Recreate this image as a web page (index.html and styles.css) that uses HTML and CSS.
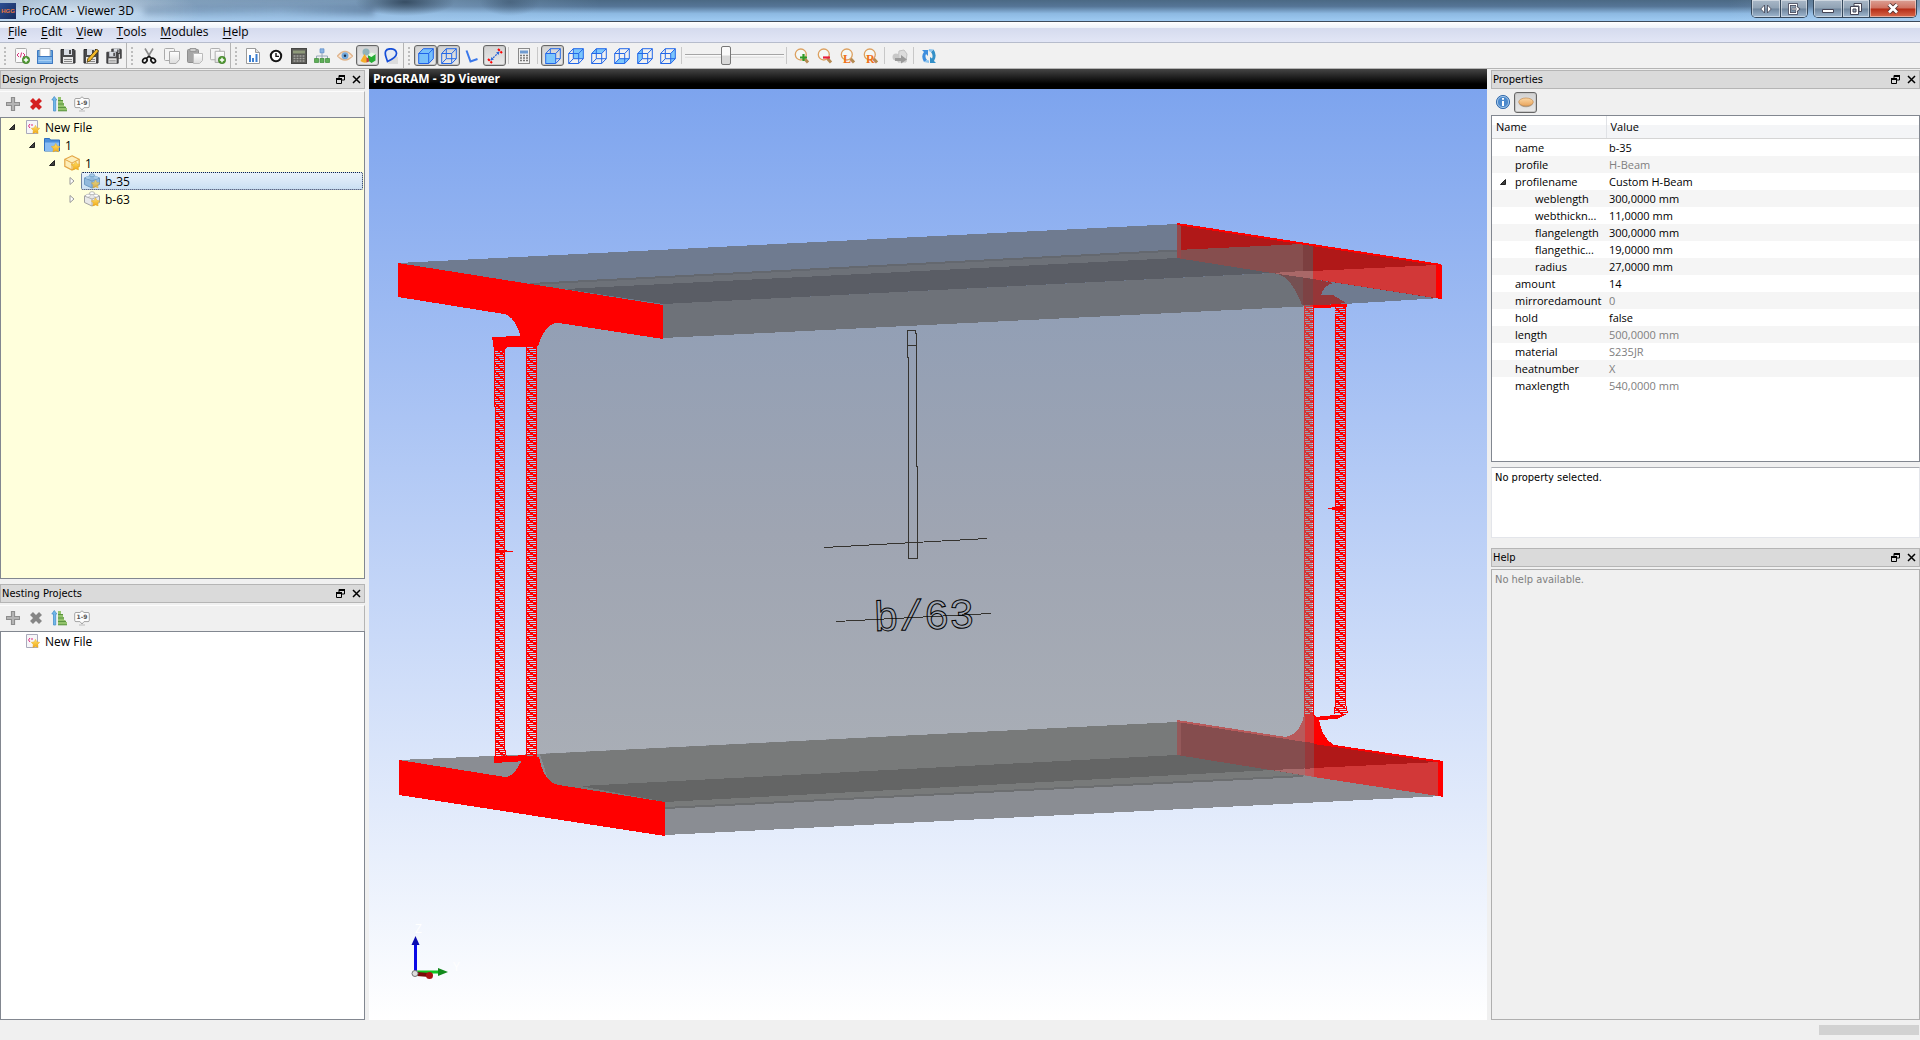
FILE: index.html
```html
<!DOCTYPE html>
<html lang="en">
<head>
<meta charset="utf-8">
<title>ProCAM - Viewer 3D</title>
<link rel="stylesheet" href="styles.css">
</head>
<body>
<svg class="defs" width="0" height="0" aria-hidden="true">
  <defs>
    <linearGradient id="gold" x1="0" y1="0" x2="0" y2="1"><stop offset="0" stop-color="#ffe36b"/><stop offset="1" stop-color="#f0a818"/></linearGradient>
    <linearGradient id="skin" x1="0" y1="0" x2="0" y2="1"><stop offset="0" stop-color="#fbd7a4"/><stop offset="1" stop-color="#e9a45c"/></linearGradient>
    <linearGradient id="silver" x1="0" y1="0" x2="0" y2="1"><stop offset="0" stop-color="#fff"/><stop offset="1" stop-color="#dcdcdc"/></linearGradient>
  </defs>
  <symbol id="plusbadge" viewBox="0 0 8 8"><circle cx="4" cy="4" r="3.7" fill="#4f9a32" stroke="#37731f" stroke-width=".6"/><path d="M4 1.8v4.4M1.8 4h4.4" stroke="#fff" stroke-width="1.4"/></symbol>
  <symbol id="star" viewBox="0 0 10 10"><path d="M5 .4l1.5 2.8 3.2.5-2.2 2.3.4 3.4L5 8.2 2.1 9.4l.4-3.4L.3 3.7l3.2-.5z" fill="url(#gold)" stroke="#e8a818" stroke-width=".5"/></symbol>
  <symbol id="new" viewBox="0 0 16 16"><rect x="1.500" y=".5" width="11" height="14" rx="1" fill="#fafafa" stroke="#aaa"/><path d="M5 5L3 7l2 2M9 5l2 2-2 2M7.600 4.500l-1.200 5" fill="none" stroke="#d8327c"/><use href="#plusbadge" x="8" y="8" width="8" height="8"/></symbol>
  <symbol id="open" viewBox="0 0 16 16"><path d="M.5 15.500V2.500h15v13z" fill="#5f9fdc" stroke="#3d78c0"/><path d="M3 .5h10v8H3z" fill="#fff" stroke="#bbb"/><path d="M.5 8.500h15v7H.5z" fill="#7db4ea" stroke="#3d78c0"/><path d="M1.500 12.500h13" stroke="#a9d0f4"/></symbol>
  <symbol id="save" viewBox="0 0 16 16"><path d="M1 1.500h13l1 1V15H1z" fill="#4a4a4c" stroke="#2e2e30"/><path d="M4 1h8v6H4z" fill="#d9dde4"/><path d="M9 2h2v4H9z" fill="#4a4a4c"/><path d="M3 9h10v6H3z" fill="#e8e8e8"/><path d="M4 11.500h8M4 13.500h8" stroke="#888"/></symbol>
  <symbol id="saveas" viewBox="0 0 16 16"><use href="#save" width="16" height="16"/><path d="M13.500 1l2 2-8 9.500-3.500 1.800 1-3.800z" fill="#f3b928" stroke="#4c3a10" stroke-width=".8"/></symbol>
  <symbol id="saveall" viewBox="0 0 16 16"><use href="#save" x="5" y="0" width="11" height="11"/><use href="#save" x="0" y="3" width="13" height="13"/></symbol>
  <symbol id="cut" viewBox="0 0 16 16"><path d="M4 .5l6 10M12 .5l-6 10" stroke="#8a8a8a" stroke-width="1.600"/><ellipse cx="3.800" cy="12.500" rx="2" ry="2.500" transform="rotate(40 3.800 12.500)" fill="none" stroke="#111" stroke-width="1.700"/><ellipse cx="12.200" cy="12.500" rx="2" ry="2.500" transform="rotate(-40 12.200 12.500)" fill="none" stroke="#111" stroke-width="1.700"/><path d="M5 10.500l3-2 3 2" fill="none" stroke="#111" stroke-width="1.500"/></symbol>
  <symbol id="copy" viewBox="0 0 16 16"><rect x=".5" y=".5" width="10" height="12" rx="1" fill="#f4f4f4" stroke="#aaa"/><path d="M5.500 3.500h10v8l-3.500 4h-6.500z" fill="url(#silver)" stroke="#aaa"/></symbol>
  <symbol id="paste" viewBox="0 0 16 16"><rect x=".5" y="1.500" width="11" height="13" rx="1" fill="#a6a6a6" stroke="#8e8e8e"/><path d="M3 .5h6v3H3z" fill="#ccc" stroke="#999"/><path d="M6.500 5.500h9v7l-3 3h-6z" fill="url(#silver)" stroke="#bbb"/></symbol>
  <symbol id="dup" viewBox="0 0 16 16"><use href="#copy" width="15" height="15"/><use href="#plusbadge" x="8" y="8" width="8" height="8"/></symbol>
  <symbol id="chart" viewBox="0 0 16 16"><path d="M1.500 .5h9l4 4v11h-13z" fill="#fff" stroke="#9a9a9a"/><path d="M10.500 .5v4h4" fill="#ddd" stroke="#9a9a9a"/><path d="M5 14V7M8 14V10M11.500 14V6" stroke="#3c7fd0" stroke-width="2"/></symbol>
  <symbol id="clock" viewBox="0 0 16 16"><circle cx="8" cy="8" r="5.200" fill="#fff" stroke="#141414" stroke-width="2"/><path d="M8 5v3.400h3" fill="none" stroke="#141414" stroke-width="1.400"/></symbol>
  <symbol id="calc" viewBox="0 0 16 16"><rect x=".5" y=".5" width="15" height="15" fill="#5c5c58" stroke="#474744"/><path d="M2 2.500h12v3H2z" fill="#8f9a7a"/><path d="M2.500 8h11M2.500 10.500h11M2.500 13h11" stroke="#a5a5a0" stroke-width="1.500" stroke-dasharray="2 1"/></symbol>
  <symbol id="org" viewBox="0 0 16 16"><path d="M8 4v4M2.500 11V8h11v3M8 8v3" fill="none" stroke="#98a8b8"/><path d="M6 .8h4v4H6z" fill="#8ab4e4" stroke="#5b8cc8" stroke-width=".7"/><path d="M.5 10.500h4v4h-4zM6 10.500h4v4H6zM11.500 10.500h4v4h-4z" fill="#5fae58" stroke="#3c8a3a" stroke-width=".7"/></symbol>
  <symbol id="eye" viewBox="0 0 16 16"><path d="M.5 8Q8-1 15.500 8 8 16 .5 8z" fill="#fae6d4" stroke="#e0b48c" stroke-width="1.300"/><circle cx="8" cy="7.800" r="3.500" fill="#74a9dc"/><circle cx="8" cy="7.800" r="1.200" fill="#1e2e48"/></symbol>
  <symbol id="shapes" viewBox="0 0 16 16"><circle cx="6" cy="4" r="3.500" fill="#8fb3ba"/><path d="M4.500 6L9 13q-4 3.500-8.500 0z" fill="#f5ae2a"/><path d="M8 7l3 1.500L15.500 6v6.500L11.500 15 8 12.500z" fill="#26ad35"/><path d="M6.500 9.500l2.500 1v3l-2.500 1z" fill="#b44"/><path d="M8 7l3.500 2L15.500 6l-4-1.500z" fill="#e9fbe5"/></symbol>
  <symbol id="lens" viewBox="0 0 16 16"><path d="M8 9h7v7H5z" fill="#dcdcdc"/><path d="M8 .8C2 .5 1.500 4.500 3 9l1.500 4.500Q14 9 13.500 5 13 1 8 .8z" fill="#e6ebf2" stroke="#164ed8" stroke-width="1.700"/></symbol>
  <symbol id="cubewire" viewBox="0 0 16 16"><path d="M.7 5.500h10v10h-10zM5.300.7h10v10h-10zM.7 5.500L5.300.7M10.700 5.500L15.300.7M.7 15.500l4.600-4.800M10.700 15.500l4.600-4.800" fill="none" stroke="#2468e8"/></symbol>
  <symbol id="cubesolid" viewBox="0 0 16 16"><path d="M.7 5.500L5.300.7h10v10l-4.600 4.800h-10z" fill="#78c0fb" stroke="#1f62ea"/><path d="M.7 5.500h10v10M10.700 5.500L15.300.7" fill="none" stroke="#1f62ea"/></symbol>
  <symbol id="cubefront" viewBox="0 0 16 16"><path d="M5.300.7h10v10h-10zM.7 5.500L5.300.7M.7 15.500l4.600-4.800" fill="none" stroke="#2468e8"/><path d="M.7 5.500h10v10h-10z" fill="#7cc6fc" stroke="#2468e8"/><path d="M10.700 5.500L15.300.7M10.700 15.500l4.600-4.800" stroke="#2468e8"/></symbol>
  <symbol id="cubeback" viewBox="0 0 16 16"><path d="M5.300.7h10v10h-10z" fill="#7cc6fc"/><use href="#cubewire" width="16" height="16"/></symbol>
  <symbol id="cubetop" viewBox="0 0 16 16"><path d="M.7 5.500L5.300.7h10l-4.600 4.800z" fill="#7cc6fc"/><use href="#cubewire" width="16" height="16"/></symbol>
  <symbol id="cubebottom" viewBox="0 0 16 16"><path d="M.7 15.500l4.600-4.800h10l-4.600 4.800z" fill="#7cc6fc"/><use href="#cubewire" width="16" height="16"/></symbol>
  <symbol id="cubeleft" viewBox="0 0 16 16"><path d="M.7 5.500L5.300.7v10L.7 15.500z" fill="#7cc6fc"/><use href="#cubewire" width="16" height="16"/></symbol>
  <symbol id="cuberight" viewBox="0 0 16 16"><path d="M10.700 5.500L15.300.7v10l-4.600 4.800z" fill="#7cc6fc"/><use href="#cubewire" width="16" height="16"/></symbol>
  <symbol id="angle" viewBox="0 0 16 16"><path d="M2.500 2.500l4 11 7-2.500" fill="none" stroke="#3a78ea" stroke-width="2"/></symbol>
  <symbol id="measure" viewBox="0 0 16 16"><path d="M1 11l4 4M11 1l4 4" stroke="#f00" stroke-width="2" stroke-dasharray="2.500 1"/><path d="M4 12l8-8" stroke="#2b66d8" stroke-width="1.200" stroke-dasharray="2 1"/><path d="M12.500 3.500L9 4.500l2.500 2.500zM3.500 12.500l1-3.500L7 11.500z" fill="#2b66d8"/></symbol>
  <symbol id="calc2" viewBox="0 0 16 16"><rect x="2.500" y=".5" width="11" height="15" fill="#f2f2f2" stroke="#8a8a8a"/><path d="M4 2.500h8v3H4z" fill="#6f9bd0"/><path d="M4 7.500h8M4 10h8M4 12.500h8" stroke="#777" stroke-width="1.500" stroke-dasharray="2 1"/></symbol>
  <symbol id="mag" viewBox="0 0 16 16"><path d="M10 10l4 4.500" stroke="#b58a52" stroke-width="3"/><circle cx="6.800" cy="6.500" r="5.500" fill="#f4f8f6" stroke="#dca060" stroke-width="1.300"/></symbol>
  <symbol id="zin" viewBox="0 0 16 16"><use href="#mag" width="16" height="16"/><path d="M9.500 6v7M6 9.500h7" stroke="#2f9a28" stroke-width="2.200"/></symbol>
  <symbol id="zout" viewBox="0 0 16 16"><use href="#mag" width="16" height="16"/><path d="M6 9.500h7" stroke="#e8203c" stroke-width="2.200"/></symbol>
  <symbol id="export" viewBox="0 0 16 16"><path d="M7 3l5-1 3 4-1 8H6z" fill="#dcdcdc" stroke="#c2c2c2"/><circle cx="4" cy="9" r="3.500" fill="#c8c8c8"/><path d="M3 10h6V7l6 4.500L9 15.500V13H3z" fill="#9a9a9a"/></symbol>
  <symbol id="refresh" viewBox="0 0 16 16"><path d="M1 2h6v6L5 6q-1.500 3 1 6L3 14Q-.5 8 3 4z" fill="#3f8ede"/><path d="M15 15H9V9l2 1.500Q12.500 7 10 4l2.500-2.500Q16.500 7 13 13z" fill="#3490c8"/><path d="M8 1l4.500.5L10 4 7.500 3zM8 15l-5-1 3-2 2 .5z" fill="#8cc4ee"/></symbol>
  <symbol id="plus" viewBox="0 0 16 16"><path d="M8 1v14M1 8h14" stroke="#8e8e8e" stroke-width="4.200"/><path d="M8 2v12M2 8h12" stroke="#b4b4b4" stroke-width="2"/></symbol>
  <symbol id="cross" viewBox="0 0 16 16"><path d="M3.500 3.500l9 9M12.500 3.500l-9 9" stroke="currentColor" stroke-width="4.200"/></symbol>
  <symbol id="sort" viewBox="0 0 16 16"><path d="M2.500 15V4H.8L3.300.5 5.800 4H4.700v11z" fill="#72b8ea" stroke="#4a92cc" stroke-width=".8"/><path d="M7 1h3v3h2v3h1v3h1.500v2H16v3H7z" fill="#93c36c"/><path d="M7 4.500h5M7 8h6M7 11.500h8M7 14.800h9" stroke="#5b9440"/></symbol>
  <symbol id="num" viewBox="0 0 16 16"><path d="M2 2.500h4L8 .8l2 1.700h4q1.300 0 1.300 1.300v6.500q0 1.300-1.300 1.300h-4l-2 2.400-2-2.400H2Q.7 11.600.7 10.300V3.800Q.7 2.500 2 2.500z" fill="#fcfcfc" stroke="#a4a4a4"/><path d="M5 15h6" stroke="#bbb"/></symbol>
  <symbol id="filestar" viewBox="0 0 16 16"><path d="M2.500 1.500h11v13h-11z" fill="#f6f6f8" stroke="#aab"/><path d="M6 5L4.500 7 6 9M8 5v2" stroke="#e0287c" fill="none"/><use href="#star" x="7" y="6" width="9" height="9"/></symbol>
  <symbol id="folderstar" viewBox="0 0 16 16"><path d="M.5 1.500h5l1 1.500h9v11H.5z" fill="#4b8fdc" stroke="#2f70c0"/><path d="M1 5.500h14V14H1z" fill="#8abcf2"/><use href="#star" x="7" y="6" width="9.500" height="9.500"/></symbol>
  <symbol id="boxstar" viewBox="0 0 16 16"><path d="M8 .8l7.200 3.500v7L8 15 .8 11.300v-7z" fill="#fdeeb8" stroke="#e3a545" stroke-width="1.200"/><path d="M.8 4.300L8 8l7.200-3.700M8 8v7" fill="none" stroke="#e3a545"/><use href="#star" x="7" y="6" width="9.500" height="9.500"/></symbol>
  <symbol id="bluebrick" viewBox="0 0 16 16"><path d="M8 2l7.500 3v6.500L8 15 .5 11.500V5z" fill="#92b9dc" stroke="#6f9cc4"/><path d="M.5 5L8 8l7.500-3M8 8v7" fill="none" stroke="#6f9cc4"/><ellipse cx="8" cy="2.200" rx="2.500" ry="1.500" fill="#a9cbe8" stroke="#6f9cc4" stroke-width=".7"/><ellipse cx="4" cy="4.600" rx="2.300" ry="1.400" fill="#a9cbe8"/><ellipse cx="12" cy="4.600" rx="2.300" ry="1.400" fill="#a9cbe8"/><use href="#star" x="7" y="6.500" width="9" height="9" opacity=".75"/></symbol>
  <symbol id="greybrick" viewBox="0 0 16 16"><path d="M8 2l7.500 3v6.500L8 15 .5 11.500V5z" fill="#e9e9e9" stroke="#a0a0a0"/><path d="M.5 5L8 8l7.500-3M8 8v7" fill="none" stroke="#b0b0b0"/><ellipse cx="8" cy="2.200" rx="2.500" ry="1.500" fill="#fff" stroke="#a0a0a0" stroke-width=".7"/><ellipse cx="4" cy="4.600" rx="2.300" ry="1.400" fill="#fff" stroke="#aaa" stroke-width=".5"/><ellipse cx="12" cy="4.600" rx="2.300" ry="1.400" fill="#fff" stroke="#aaa" stroke-width=".5"/><use href="#star" x="7" y="6.500" width="9" height="9"/></symbol>
  <symbol id="expanded" viewBox="0 0 8 8"><path d="M6.500 1.500v5h-5z" fill="#404040" stroke="#222"/></symbol>
  <symbol id="collapsed" viewBox="0 0 8 8"><path d="M2 .5L6 4 2 7.500z" fill="#fff" stroke="#999"/></symbol>
  <symbol id="float" viewBox="0 0 9 9"><path d="M3 3V.5h5.500V5H6" fill="none" stroke="#000"/><path d="M3 1h6" stroke="#000" stroke-width="2"/><path d="M.5 4h5v4.500h-5z" fill="none" stroke="#000"/><path d="M0 4h6" stroke="#000" stroke-width="2"/></symbol>
  <symbol id="close" viewBox="0 0 9 9"><path d="M1 1l7 7M8 1L1 8" stroke="#000" stroke-width="1.500"/></symbol>
  <symbol id="info" viewBox="0 0 16 16"><circle cx="8" cy="8" r="6.600" fill="#4c89cc" stroke="#3a6fae"/><circle cx="8" cy="8" r="5.600" fill="none" stroke="#b9d4ee" stroke-width=".8"/><path d="M8 7v5M8 4v1.800" stroke="#fff" stroke-width="2"/></symbol>
  <symbol id="oval" viewBox="0 0 16 16"><ellipse cx="8" cy="9" rx="7" ry="4.200" fill="#a9a298"/><ellipse cx="8" cy="8" rx="7.300" ry="4" fill="url(#skin)" stroke="#c58d50" stroke-width=".7"/></symbol>
</svg>

<header class="titlebar">
  <span class="appicon">HGG</span>
  <h1>ProCAM - Viewer 3D</h1>
  <span class="behind"></span>
  <div class="winbtns">
    <button type="button" class="w28" aria-label="Swap screen"><svg width="12" height="10" viewBox="0 0 12 10"><path d="M4.500 1v8L.8 5zM7.500 1v8l3.700-4z" fill="#fff" stroke="#445" stroke-width=".8"/></svg></button>
    <button type="button" class="w27" aria-label="Send to screen"><svg width="13" height="12" viewBox="0 0 13 12"><path d="M8.500 3.500v-2h-7v9h7v-2M4 6h6M8 3.800L10.500 6 8 8.200" fill="none" stroke="#445" stroke-width="2.600"/><path d="M8.500 3.500v-2h-7v9h7v-2M4 6h6M8 3.800L10.500 6 8 8.200" fill="none" stroke="#fff" stroke-width="1.100"/></svg></button>
  </div>
  <div class="winbtns">
    <button type="button" class="w28" aria-label="Minimize"><svg width="12" height="10" viewBox="0 0 12 10"><path d="M.5 5.500h11v3H.5z" fill="#fff" stroke="#445"/></svg></button>
    <button type="button" class="w27" aria-label="Restore"><svg width="12" height="12" viewBox="0 0 12 12"><path d="M4 .5h7.500v8H9V3H4z" fill="#fff" stroke="#445"/><path d="M.5 3.500H8.500v8h-8z" fill="#fff" stroke="#445"/><path d="M3 6h3v3H3z" fill="#9ab" stroke="#445"/></svg></button>
    <button type="button" class="w47 red" aria-label="Close"><svg width="12" height="11" viewBox="0 0 12 11"><path d="M2 1.500l8 8M10 1.500l-8 8" stroke="#503030" stroke-width="4.500"/><path d="M2 1.500l8 8M10 1.500l-8 8" stroke="#fff" stroke-width="2.800"/></svg></button>
  </div>
</header>

<nav class="menubar">
  <button type="button"><u>F</u>ile</button><button type="button"><u>E</u>dit</button><button type="button"><u>V</u>iew</button><button type="button"><u>T</u>ools</button><button type="button"><u>M</u>odules</button><button type="button"><u>H</u>elp</button>
</nav>

<div class="toolbar">
  <div class="group">
    <button type="button" class="tb" aria-label="New"><svg><use href="#new"/></svg></button>
    <button type="button" class="tb" aria-label="Open"><svg><use href="#open"/></svg></button>
    <button type="button" class="tb" aria-label="Save"><svg><use href="#save"/></svg></button>
    <button type="button" class="tb" aria-label="Save as"><svg><use href="#saveas"/></svg></button>
    <button type="button" class="tb" aria-label="Save all"><svg><use href="#saveall"/></svg></button>
  </div>
  <div class="group">
    <button type="button" class="tb" aria-label="Cut"><svg><use href="#cut"/></svg></button>
    <button type="button" class="tb" aria-label="Copy"><svg><use href="#copy"/></svg></button>
    <button type="button" class="tb" aria-label="Paste"><svg><use href="#paste"/></svg></button>
    <button type="button" class="tb" aria-label="Duplicate"><svg><use href="#dup"/></svg></button>
  </div>
  <div class="group">
    <button type="button" class="tb" aria-label="Report"><svg><use href="#chart"/></svg></button>
    <button type="button" class="tb" aria-label="Time"><svg><use href="#clock"/></svg></button>
    <button type="button" class="tb" aria-label="Calculate"><svg><use href="#calc"/></svg></button>
    <button type="button" class="tb" aria-label="Structure"><svg><use href="#org"/></svg></button>
    <button type="button" class="tb" aria-label="Show"><svg><use href="#eye"/></svg></button>
    <button type="button" class="tb on" aria-label="Shapes"><svg><use href="#shapes"/></svg></button>
    <button type="button" class="tb" aria-label="Profile"><svg><use href="#lens"/></svg></button>
  </div>
  <div class="group last">
    <button type="button" class="tb on" aria-label="Solid"><svg><use href="#cubesolid"/></svg></button>
    <button type="button" class="tb on" aria-label="Wireframe"><svg><use href="#cubewire"/></svg></button>
    <button type="button" class="tb" aria-label="Axes"><svg><use href="#angle"/></svg></button>
    <button type="button" class="tb on" aria-label="Measure"><svg><use href="#measure"/></svg></button>
    <span class="sep"></span>
    <button type="button" class="tb" aria-label="Calculator"><svg><use href="#calc2"/></svg></button>
    <span class="sep"></span>
    <button type="button" class="tb on" aria-label="Front view"><svg><use href="#cubefront"/></svg></button>
    <button type="button" class="tb" aria-label="Back view"><svg><use href="#cubeback"/></svg></button>
    <button type="button" class="tb" aria-label="Top view"><svg><use href="#cubetop"/></svg></button>
    <button type="button" class="tb" aria-label="Bottom view"><svg><use href="#cubebottom"/></svg></button>
    <button type="button" class="tb" aria-label="Left view"><svg><use href="#cubeleft"/></svg></button>
    <button type="button" class="tb" aria-label="Right view"><svg><use href="#cuberight"/></svg></button>
    <span class="sep"></span>
    <input type="range" class="slider" min="0" max="100" value="41" aria-label="Transparency">
    <span class="sep"></span>
    <button type="button" class="tb" aria-label="Zoom in"><svg><use href="#zin"/></svg></button>
    <button type="button" class="tb" aria-label="Zoom out"><svg><use href="#zout"/></svg></button>
    <button type="button" class="tb" aria-label="Zoom left"><svg viewBox="0 0 16 16"><use href="#mag"/><text x="3" y="15" class="zoomletter">L</text></svg></button>
    <button type="button" class="tb" aria-label="Zoom right"><svg viewBox="0 0 16 16"><use href="#mag"/><text x="3" y="15" class="zoomletter">R</text></svg></button>
    <span class="sep"></span>
    <button type="button" class="tb" aria-label="Export"><svg><use href="#export"/></svg></button>
    <span class="sep"></span>
    <button type="button" class="tb" aria-label="Refresh"><svg><use href="#refresh"/></svg></button>
  </div>
</div>

<main>
  <aside class="left">
    <section class="dock">
      <div class="docktitle"><h2>Design Projects</h2><button type="button" aria-label="Float"><svg><use href="#float"/></svg></button><button type="button" aria-label="Close"><svg><use href="#close"/></svg></button></div>
      <div class="docktools">
        <button type="button" class="tb" aria-label="Add"><svg><use href="#plus"/></svg></button>
        <button type="button" class="tb del" aria-label="Remove"><svg><use href="#cross"/></svg></button>
        <button type="button" class="tb" aria-label="Sort"><svg><use href="#sort"/></svg></button>
        <button type="button" class="tb" aria-label="Number"><svg viewBox="0 0 16 16"><use href="#num"/><text x="8" y="9" class="numtext">1-9</text></svg></button>
      </div>
      <ul class="tree yellow">
        <li class="l1"><svg class="exp"><use href="#expanded"/></svg><span class="item"><svg><use href="#filestar"/></svg>New File</span></li>
        <li class="l2"><svg class="exp"><use href="#expanded"/></svg><span class="item"><svg><use href="#folderstar"/></svg>1</span></li>
        <li class="l3"><svg class="exp"><use href="#expanded"/></svg><span class="item"><svg><use href="#boxstar"/></svg>1</span></li>
        <li class="l4"><svg class="exp"><use href="#collapsed"/></svg><span class="item selected"><svg><use href="#bluebrick"/></svg>b-35</span></li>
        <li class="l4"><svg class="exp"><use href="#collapsed"/></svg><span class="item"><svg><use href="#greybrick"/></svg>b-63</span></li>
      </ul>
    </section>
    <section class="dock">
      <div class="docktitle"><h2>Nesting Projects</h2><button type="button" aria-label="Float"><svg><use href="#float"/></svg></button><button type="button" aria-label="Close"><svg><use href="#close"/></svg></button></div>
      <div class="docktools">
        <button type="button" class="tb" aria-label="Add"><svg><use href="#plus"/></svg></button>
        <button type="button" class="tb off" aria-label="Remove"><svg><use href="#cross"/></svg></button>
        <button type="button" class="tb" aria-label="Sort"><svg><use href="#sort"/></svg></button>
        <button type="button" class="tb" aria-label="Number"><svg viewBox="0 0 16 16"><use href="#num"/><text x="8" y="9" class="numtext">1-9</text></svg></button>
      </div>
      <ul class="tree">
        <li class="l1"><span class="exp"></span><span class="item"><svg><use href="#filestar"/></svg>New File</span></li>
      </ul>
    </section>
  </aside>

  <section class="viewer">
    <h2>ProGRAM - 3D Viewer</h2>
    <div class="canvas">
      <svg class="scene" viewBox="369 89 1118 931" shape-rendering="crispEdges">
        <defs>
          <linearGradient id="web" gradientUnits="userSpaceOnUse" x1="0" y1="310" x2="0" y2="760"><stop offset="0" stop-color="#929fb5"/><stop offset=".5" stop-color="#9fa5b2"/><stop offset="1" stop-color="#a9aeb6"/></linearGradient>
          <pattern id="hatch" width="10" height="8" patternUnits="userSpaceOnUse"><path d="M0 .5h10M0 2.500h10M0 4.500h10M0 6.500h10M0 1.500h3M3 3.500h3M6 5.500h3M8 7.500h2" stroke="#f00" fill="none"/></pattern>
          <pattern id="hatchdim" width="10" height="8" patternUnits="userSpaceOnUse"><path d="M0 .5h10M0 2.500h10M0 4.500h10M0 6.500h10M0 1.500h3M3 3.500h3M6 5.500h3M8 7.500h2" stroke="#d83434" fill="none"/></pattern>
        </defs>
        <!-- web plate -->
        <path d="M536 320L1312 300V745L536 765z" fill="url(#web)"/>
        <!-- top flange -->
        <path d="M398 263L1177 224 1441 265V298L1312 306 663 338z" fill="#6f7b90"/>
        <path d="M530 284L1303 244 1313 270 663 304z" fill="#6d7178"/>
        <path d="M530 284L1303 244" stroke="#64686f" stroke-width="2"/>
        <path d="M565 289L1177 258 1272 273 663 304z" fill="#5a5d65"/>
        <path d="M663 304L1313 271V306L663 338z" fill="#6e7279"/>
        <!-- far end of top flange -->
        <path d="M1177 224L1441 265V299L1177 258z" fill="#b01818"/>
        <path d="M1313 271L1436 265V298L1313 279z" fill="#d23838"/>
        <path d="M1177 250L1303 244V278L1272 273 1177 258z" fill="#864e4e"/>
        <path d="M1272 273L1303 271 1313 271V280L1303 278z" fill="#a96868"/>
        <path d="M1272 273Q1290 273 1302 305H1313V279z" fill="#755052"/>
        <path d="M1303 244H1313V271H1303z" fill="#7c3f40"/>
        <path d="M1303 278L1313 279V305H1303z" fill="#7d4244"/>
        <path d="M1313 279L1333 283Q1324 285 1321 295H1333L1346 303 1313 306z" fill="#963638"/>
        <path d="M1177 224V258h4V225z" fill="#95494b"/>
        <path d="M1177 224L1441 265" stroke="#f00" stroke-width="2"/>
        <path d="M1436 265h6v34l-6-1z" fill="#f00"/>
        <!-- bottom flange -->
        <path d="M399 760L536 754 1177 722 1443 762V796L665 835z" fill="#8a8d93"/>
        <path d="M540 754L1177 722 1305 742 1312 768 1303 776 665 808 550 786z" fill="#787a7a"/>
        <path d="M665 808L1303 776" stroke="#6c6e70" stroke-width="2"/>
        <path d="M580 786L1177 755 1272 770 665 802z" fill="#646565"/>
        <!-- far end of bottom flange -->
        <path d="M1177 721L1443 762V796L1177 755z" fill="#b01818"/>
        <path d="M1314 768L1438 762V796L1314 777z" fill="#d23838"/>
        <path d="M1177 721L1314 742V777L1177 755z" fill="#854d4e"/>
        <path d="M1272 770L1314 768V777z" fill="#a86c6d"/>
        <path d="M1305 741L1314 742V777L1305 775z" fill="#96393b"/>
        <path d="M1305 769L1314 768V777L1305 775z" fill="#c15658"/>
        <path d="M1177 721V755h4V722z" fill="#94595a"/>
        <path d="M1285 737Q1300 735 1304 715H1305V742z" fill="#b85a5b"/>
        <path d="M1305 715h9v28l-9-1z" fill="#d23838"/>
        <path d="M1314 715l5 4Q1322 738 1334 745L1314 743z" fill="#f00"/>
        <path d="M1177 721L1305 741" stroke="#b85a5b" stroke-width="2"/>
        <path d="M1314 743L1443 762" stroke="#f00" stroke-width="2"/>
        <path d="M1438 762h5v35l-5-1z" fill="#f00"/>
        <!-- far web edges -->
        <path d="M1304 305h9v411h-9z" fill="url(#hatchdim)"/>
        <path d="M1304.500 305V716" stroke="#d83434" fill="none"/><path d="M1313.500 305V716" stroke="#f00"/>
        <path d="M1335 306h10v400l2 8h-13l1-8z" fill="url(#hatch)"/>
        <path d="M1334.500 316h1V700l-1 14M1345.500 306v398l2 9" stroke="#f00" fill="none"/>
        <path d="M1314 305l33-1v3l-33 1zM1315 717l20-2 12-1-10 5-18 1z" fill="#f00"/>
        <path d="M1328 508h17M1332 507.500h11M1332 509.500h11" stroke="#f00"/>
        <!-- near end of the beam -->
        <path d="M495 340h10v417h-10z" fill="url(#hatch)"/>
        <path d="M526 346h11v412h-11z" fill="url(#hatch)"/>
        <path d="M494.500 340v66h1V750l-1 12M504.500 347V747l2 10M526.500 346v412M536.500 346v412" stroke="#f00" fill="none"/>
        <path d="M492 337L520 336 538 343 537 347H507L504 352 494 350zM494 757l32-2v6l-32 2z" fill="#f00"/>
        <path d="M496 551.500h17M499 550.500h8M499 552.500h6" stroke="#f00"/>
        <path d="M398 263L663 305V339L559 323Q546 322 538 346L521 338Q515 316 504 314L398 297z" fill="#f00"/>
        <path d="M399 760L505 777Q515 777 523 757H539Q544 783 559 785L665 802V836L399 795z" fill="#f00"/>
        <!-- slot and marking -->
        <path d="M907.500 330.500h8v3h1V466h1V558.500h-9V357h-1zM908 345.500h8" fill="none" stroke="#35332f"/>
        <path d="M824 547.500L987 538.500M836 621.500L991 613.500" fill="none" stroke="#35332f"/>
        <text x="874" y="631" class="marking" transform="rotate(-2 874 631)">b/63</text>
        <!-- axis triad -->
        <text x="415" y="933" class="axis">Z</text><text x="453" y="971" class="axis">Y</text>
        <g shape-rendering="auto">
          <path d="M415.500 972V944" stroke="#0a0ae6" stroke-width="3"/><path d="M415.500 936l4 9h-8z" fill="#0a0ab0"/>
          <path d="M417 972h22" stroke="#10c420" stroke-width="3"/><path d="M448 972l-10 4v-8z" fill="#128a1c"/>
          <path d="M417 974l12 1" stroke="#7a0808" stroke-width="4"/><circle cx="429.500" cy="975.500" r="3.500" fill="#a81212"/>
          <circle cx="415" cy="973.500" r="3" fill="#ddd" stroke="#777"/>
        </g>
      </svg>
    </div>
  </section>

  <aside class="right">
    <section class="dock">
      <div class="docktitle"><h2>Properties</h2><button type="button" aria-label="Float"><svg><use href="#float"/></svg></button><button type="button" aria-label="Close"><svg><use href="#close"/></svg></button></div>
      <div class="proptools">
        <button type="button" class="tb" aria-label="Info"><svg><use href="#info"/></svg></button>
        <button type="button" class="tb on" aria-label="Section"><svg><use href="#oval"/></svg></button>
      </div>
      <div class="propbox">
        <table>
          <thead><tr><th>Name</th><th>Value</th></tr></thead>
          <tbody>
            <tr><td>name</td><td>b-35</td></tr>
            <tr class="ro"><td>profile</td><td>H-Beam</td></tr>
            <tr class="parent"><td><svg class="exp"><use href="#expanded"/></svg>profilename</td><td>Custom H-Beam</td></tr>
            <tr class="child"><td>weblength</td><td>300,0000 mm</td></tr>
            <tr class="child"><td>webthickn...</td><td>11,0000 mm</td></tr>
            <tr class="child"><td>flangelength</td><td>300,0000 mm</td></tr>
            <tr class="child"><td>flangethic...</td><td>19,0000 mm</td></tr>
            <tr class="child"><td>radius</td><td>27,0000 mm</td></tr>
            <tr><td>amount</td><td>14</td></tr>
            <tr class="ro"><td>mirroredamount</td><td>0</td></tr>
            <tr><td>hold</td><td>false</td></tr>
            <tr class="ro"><td>length</td><td>500,0000 mm</td></tr>
            <tr class="ro"><td>material</td><td>S235JR</td></tr>
            <tr class="ro"><td>heatnumber</td><td>X</td></tr>
            <tr class="ro"><td>maxlength</td><td>540,0000 mm</td></tr>
          </tbody>
        </table>
      </div>
      <p class="desc">No property selected.</p>
    </section>
    <section class="dock">
      <div class="docktitle"><h2>Help</h2><button type="button" aria-label="Float"><svg><use href="#float"/></svg></button><button type="button" aria-label="Close"><svg><use href="#close"/></svg></button></div>
      <p class="helpbox">No help available.</p>
    </section>
  </aside>
</main>

<footer class="status"><span class="progress"></span></footer>
</body>
</html>
```

FILE: styles.css
```css
* { box-sizing: border-box; }
body {
  margin: 0;
  min-height: 100vh;
  display: flex;
  flex-direction: column;
  background: #f0f0f0;
  color: #000;
  font: 12px/17px "Open Sans", "Noto Sans", sans-serif;
}
h1, h2, p, ul { margin: 0; padding: 0; font-weight: normal; }
button { border: 0; padding: 0; margin: 0; background: none; font: inherit; color: inherit; }
.defs { position: absolute; }

/* title bar */
.titlebar {
  height: 22px;
  display: flex;
  align-items: flex-start;
  border-bottom: 1px solid #3c4a5a;
  background:
    radial-gradient(ellipse 130px 30px at 70px 12px, rgba(225, 236, 246, .8), transparent),
    radial-gradient(ellipse 50px 14px at 405px 2px, rgba(40, 60, 80, .8), transparent),
    radial-gradient(ellipse 30px 14px at 510px 2px, rgba(60, 85, 110, .6), transparent),
    linear-gradient(90deg, rgba(180, 205, 230, .6) 0, rgba(160, 195, 228, .5) 380px, transparent 600px, transparent 90%, rgba(190, 215, 240, .4)),
    linear-gradient(#4b6984 0, #557596 30%, #8db9e2 65%, #9cc8f0 95%);
}
.titlebar h1 { margin-left: 6px; font-size: 12px; line-height: 21px; }
.appicon {
  width: 16px; height: 16px; margin-top: 3px; text-align: center;
  background: linear-gradient(135deg, #2c4f94, #162c5c);
  color: #e8763c; font: bold 6px/16px "Liberation Sans", sans-serif;
}
.behind { width: 230px; height: 8px; margin: 7px auto 0 10px; background: linear-gradient(90deg, rgba(80, 110, 140, .4), rgba(80, 110, 140, .2) 60%, rgba(60, 85, 115, .5)); filter: blur(3px); }
.winbtns {
  display: flex; height: 18px; margin-right: 5px; overflow: hidden;
  border: 1px solid #35485c; border-top: 0; border-radius: 0 0 5px 5px;
}
.winbtns:last-child { margin-right: 3px; }
.winbtns button { display: flex; align-items: center; justify-content: center; height: 17px; background: linear-gradient(#a9b8c8 0, #90a2b4 48%, #6f859c 52%, #a0b8d0); box-shadow: inset 0 0 0 1px rgba(255, 255, 255, .45); }
.winbtns button + button { border-left: 1px solid #35485c; }
.winbtns .w28 { width: 28px; }
.winbtns .w27 { width: 27px; }
.winbtns .w47 { width: 47px; }
.winbtns .red { background: linear-gradient(#dba095 0, #cf7160 48%, #b52c16 52%, #d8694c); }

/* menu bar */
.menubar { height: 21px; padding-left: 1px; display: flex; border-bottom: 1px solid #b6bccc; background: linear-gradient(#fff 0, #edf2f9 30%, #d5dbee 32%, #e2e6f6); }
.menubar button { padding: 0 7px; line-height: 20px; }
.menubar u { text-underline-offset: 2px; }

/* toolbars */
.toolbar { height: 26px; display: flex; border-bottom: 1px solid #b4b4b4; background: #f1f1f1; }
.group { display: flex; align-items: center; padding: 0 1px 0 10px; border-right: 1px solid #b4b4b4; background: linear-gradient(90deg, transparent 4px, #bdbdbd 4px, #bdbdbd 6px, transparent 6px) 0 4px / 10px 2px no-repeat, linear-gradient(90deg, transparent 4px, #bdbdbd 4px, #bdbdbd 6px, transparent 6px) 0 8px / 10px 2px no-repeat, linear-gradient(90deg, transparent 4px, #bdbdbd 4px, #bdbdbd 6px, transparent 6px) 0 12px / 10px 2px no-repeat, linear-gradient(90deg, transparent 4px, #bdbdbd 4px, #bdbdbd 6px, transparent 6px) 0 16px / 10px 2px no-repeat, linear-gradient(90deg, transparent 4px, #bdbdbd 4px, #bdbdbd 6px, transparent 6px) 0 20px / 10px 2px no-repeat; }
.group.last { border-right: 0; }
.tb { width: 23px; height: 21px; display: flex; align-items: center; justify-content: center; border-radius: 3px; }
.tb svg { width: 16px; height: 16px; }
.tb.on { border: 1px solid #666; background: linear-gradient(#d2d2d2, #e9e9e9); box-shadow: inset 0 0 0 1px #c6c6c6; }
.sep { width: 1px; height: 17px; margin: 0 3px 0 2px; background: #c8c8c8; }
.zoomletter { font: bold 12px "Liberation Serif", serif; fill: #f0701a; }
.numtext { font: bold 6px "DejaVu Sans", sans-serif; text-anchor: middle; fill: #555; }
.slider { appearance: none; width: 99px; height: 20px; margin: 0; background: linear-gradient(transparent 8px, #a5a5a5 8px, #a5a5a5 9px, #fff 9px, #dcdcdc 12px, transparent 12px); }
.slider::-webkit-slider-thumb { appearance: none; width: 10px; height: 19px; border: 1px solid #777; border-radius: 2px; background: linear-gradient(#fafafa 48%, #d8d8d8 52%); }

/* main area */
main { flex: 1; display: grid; grid-template-columns: 365px 1fr 429px; gap: 4px; }
.left, .right { display: grid; padding-top: 1px; }
.left { grid-template-rows: 509fr 436fr; gap: 5px; }
.right { grid-template-rows: 468fr 472fr; gap: 10px; }
.dock { display: flex; flex-direction: column; min-height: 0; }
.docktitle { height: 19px; display: flex; align-items: center; border: 1px solid #b5b5b5; background: #dadada; }
.docktitle h2 { flex: 1; padding-left: 1px; font: 11px/17px "DejaVu Sans Condensed", "DejaVu Sans", sans-serif; }
.docktitle button { width: 16px; display: flex; justify-content: center; }
.docktitle svg { width: 9px; height: 9px; }
.docktools { height: 26px; margin-top: 2px; padding: 0 0 2px 1px; display: flex; align-items: center; border-right: 1px solid #b5b5b5; border-top: 1px solid #fcfcfc; }
.docktools .del { color: #d42020; }
.docktools .off { color: #868686; }
.tree { flex: 1; list-style: none; border: 1px solid #828790; background: #fff; }
.tree.yellow { background: #ffffdc; }
.tree li { display: flex; align-items: center; height: 18px; padding-right: 1px; }
.exp { width: 8px; height: 8px; flex: none; }
.l1 { padding-left: 7px; }
.l2 { padding-left: 27px; }
.l3 { padding-left: 47px; }
.l4 { padding-left: 67px; }
.item { flex: 1; height: 18px; margin-left: 5px; padding-left: 2px; display: flex; align-items: center; gap: 5px; border: 1px solid transparent; }
.item svg { width: 16px; height: 16px; }
.item.selected { border: 1px dotted #10204c; border-radius: 2px; background: linear-gradient(#e8f1fa, #cbe0f3); }

.viewer { display: flex; flex-direction: column; min-height: 0; }
.viewer h2 { height: 20px; padding-left: 4px; background: linear-gradient(#444, #000 75%); color: #fff; font: bold 12px/20px "Open Sans", "Noto Sans", sans-serif; }
.canvas { flex: 1; display: flex; min-height: 0; background: linear-gradient(#7da4ee, #fff); }
.scene { width: 100%; height: 100%; }
.marking { font: 42px "Liberation Mono", monospace; fill: none; stroke: #000; stroke-width: 1px; }
.axis { font: 12px "Open Sans", sans-serif; fill: #fff; }

.proptools { height: 26px; display: flex; align-items: center; }
.propbox { flex: 1; border: 1px solid #828790; background: #fff; }
table { width: 100%; border-collapse: collapse; table-layout: fixed; font-size: 11px; }
th { height: 22px; padding: 0 0 0 4px; text-align: left; font-weight: normal; border-bottom: 1px solid #d5d5d5; background: linear-gradient(#fff 40%, #f4f5f7 42%); }
th:first-child { width: 114px; border-right: 1px solid #e0e2e6; }
td { height: 17px; padding: 0 0 0 3px; line-height: 17px; white-space: nowrap; }
td:first-child { padding-left: 23px; }
.parent td:first-child { padding-left: 7px; }
.parent .exp { margin-right: 8px; }
.child td:first-child { padding-left: 43px; }
.ro td:last-child { color: #808080; }
tbody tr:nth-child(even) { background: #f5f5f5; }
.desc, .helpbox { padding: 2px 3px; font: 11px/16px "DejaVu Sans Condensed", "DejaVu Sans", sans-serif; }
.desc { height: 71px; margin-top: 5px; border: 1px solid #e3e5ea; border-top-color: #abadb3; background: #fff; }
.helpbox { flex: 1; margin-top: 2px; border: 1px solid #afafaf; color: #808080; }

.status { height: 20px; display: flex; justify-content: flex-end; align-items: center; padding-right: 1px; }
.progress { width: 100px; height: 10px; background: #d2d2d2; }
```
